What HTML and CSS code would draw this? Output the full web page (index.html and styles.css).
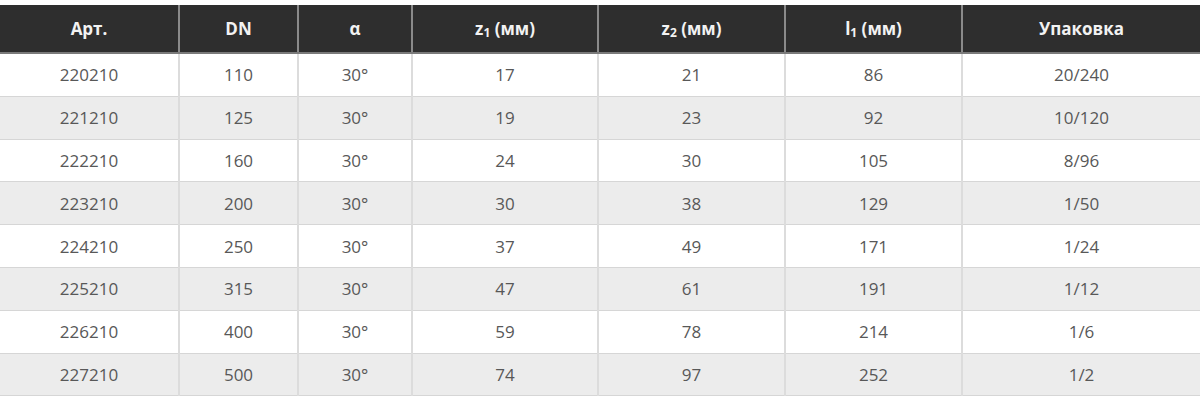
FILE: index.html
```html
<!DOCTYPE html>
<html lang="ru">
<head>
<meta charset="utf-8">
<link rel="stylesheet" href="styles.css">
</head>
<body>
<table class="spec">
  <colgroup>
    <col class="c1"><col class="c2"><col class="c3"><col class="c4"><col class="c5"><col class="c6"><col class="c7">
  </colgroup>
  <thead>
    <tr>
      <th>Арт.</th>
      <th>DN</th>
      <th>α</th>
      <th>z<sub>1</sub> (мм)</th>
      <th>z<sub>2</sub> (мм)</th>
      <th>l<sub>1</sub> (мм)</th>
      <th>Упаковка</th>
    </tr>
  </thead>
  <tbody>
    <tr><td>220210</td><td>110</td><td>30°</td><td>17</td><td>21</td><td>86</td><td>20/240</td></tr>
    <tr><td>221210</td><td>125</td><td>30°</td><td>19</td><td>23</td><td>92</td><td>10/120</td></tr>
    <tr><td>222210</td><td>160</td><td>30°</td><td>24</td><td>30</td><td>105</td><td>8/96</td></tr>
    <tr><td>223210</td><td>200</td><td>30°</td><td>30</td><td>38</td><td>129</td><td>1/50</td></tr>
    <tr><td>224210</td><td>250</td><td>30°</td><td>37</td><td>49</td><td>171</td><td>1/24</td></tr>
    <tr><td>225210</td><td>315</td><td>30°</td><td>47</td><td>61</td><td>191</td><td>1/12</td></tr>
    <tr><td>226210</td><td>400</td><td>30°</td><td>59</td><td>78</td><td>214</td><td>1/6</td></tr>
    <tr><td>227210</td><td>500</td><td>30°</td><td>74</td><td>97</td><td>252</td><td>1/2</td></tr>
  </tbody>
</table>
</body>
</html>
```

FILE: styles.css
```css
html, body {
  margin: 0;
  padding: 0;
  background: #ffffff;
}

body {
  padding-top: 5px;
  font-family: "Open Sans", "Liberation Sans", sans-serif;
}

.spec {
  width: 1200px;
  border-collapse: collapse;
  table-layout: fixed;
}

.c1 { width: 179px; }
.c2 { width: 119px; }
.c3 { width: 114px; }
.c4 { width: 186px; }
.c5 { width: 187px; }
.c6 { width: 177px; }
.c7 { width: 238px; }

.spec th {
  background: #2e2e2e;
  color: #f2f2f2;
  font-weight: 700;
  font-size: 17px;
  height: 47px;
  padding: 0;
  text-align: center;
  vertical-align: middle;
  border-right: 2px solid #8a8a8a;
  border-bottom: 2px solid #7a7a7a;
}

.spec th:last-child {
  border-right: none;
}

.spec th sub {
  font-size: 12px;
  vertical-align: -2px;
  line-height: 0;
}

.spec td {
  height: 41.8px;
  padding: 0;
  text-align: center;
  vertical-align: middle;
  font-size: 17px;
  color: #585858;
  border-right: 2px solid #dcdcdc;
  border-bottom: 1px solid #d6d6d6;
}

.spec td:last-child {
  border-right: none;
}

.spec tbody tr:nth-child(even) td {
  background: #ececec;
}
```
